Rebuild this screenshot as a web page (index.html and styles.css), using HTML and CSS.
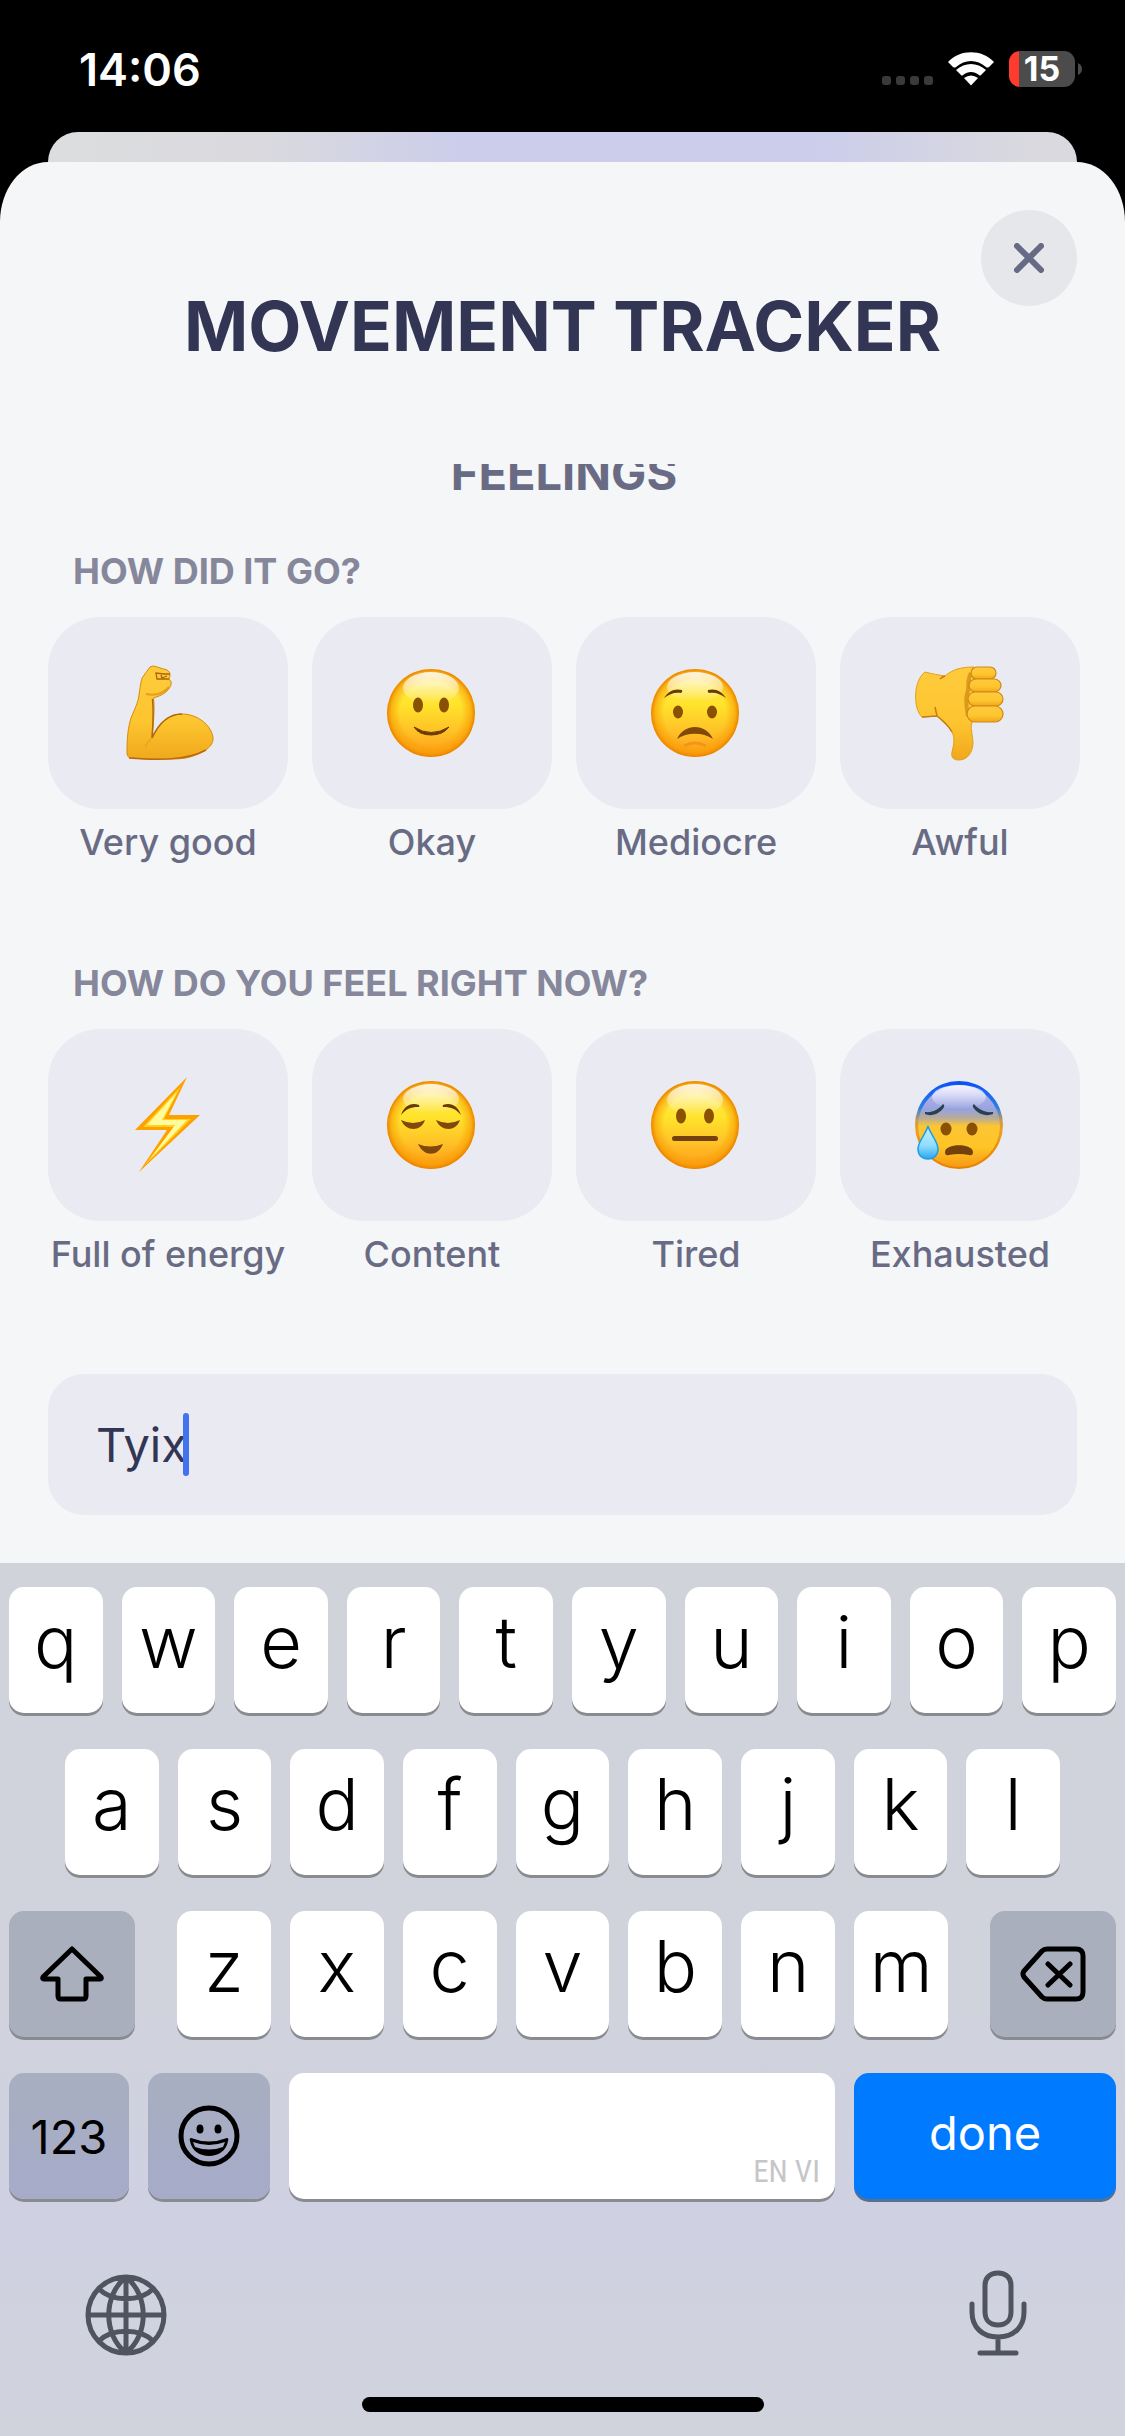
FILE: index.html
```html
<!DOCTYPE html>
<html lang="en">
<head>
  <meta charset="UTF-8">
  <meta name="viewport" content="width=device-width, initial-scale=1.0">
  <title>Movement tracker</title>
  <link rel="stylesheet" href="styles.css">
</head>
<body>

<!-- shared emoji gradients -->
<svg class="defs" aria-hidden="true">
  <defs>
    <linearGradient id="face" x1="0" y1="0" x2="0" y2="1">
      <stop offset="0" stop-color="#ffe95a"/>
      <stop offset="0.4" stop-color="#ffe42c"/>
      <stop offset="0.7" stop-color="#ffc227"/>
      <stop offset="1" stop-color="#ff9c18"/>
    </linearGradient>
    <radialGradient id="rim">
      <stop offset="0.7" stop-color="#f59a00" stop-opacity="0"/>
      <stop offset="0.9" stop-color="#f79a00" stop-opacity="0.6"/>
      <stop offset="1" stop-color="#ea8200" stop-opacity="1"/>
    </radialGradient>
    <linearGradient id="shine" x1="0" y1="0" x2="0" y2="1">
      <stop offset="0" stop-color="#fff" stop-opacity="0.85"/>
      <stop offset="0.4" stop-color="#fff" stop-opacity="0.55"/>
      <stop offset="1" stop-color="#fff" stop-opacity="0"/>
    </linearGradient>
    <linearGradient id="skin" x1="0" y1="0" x2="0" y2="1">
      <stop offset="0" stop-color="#ffcb3c"/>
      <stop offset="0.6" stop-color="#fdc52f"/>
      <stop offset="1" stop-color="#f0a81c"/>
    </linearGradient>
    <linearGradient id="cold" x1="0" y1="0" x2="0" y2="1">
      <stop offset="0" stop-color="#b9b8f5"/>
      <stop offset="0.3" stop-color="#98a3dd"/>
      <stop offset="0.4" stop-color="#b5aa9c"/>
      <stop offset="0.5" stop-color="#fcc534"/>
      <stop offset="0.75" stop-color="#ffc526"/>
      <stop offset="1" stop-color="#f79a14"/>
    </linearGradient>
    <linearGradient id="coldRim" x1="0" y1="0" x2="0" y2="1">
      <stop offset="0" stop-color="#0b4ff5"/>
      <stop offset="0.3" stop-color="#2b80e6"/>
      <stop offset="0.45" stop-color="#c99a55"/>
      <stop offset="0.55" stop-color="#eda01c"/>
      <stop offset="1" stop-color="#e88000"/>
    </linearGradient>
    <linearGradient id="drop" x1="0" y1="0" x2="0" y2="1">
      <stop offset="0" stop-color="#c9f2ff"/>
      <stop offset="0.6" stop-color="#8fdcff"/>
      <stop offset="1" stop-color="#2ba6ee"/>
    </linearGradient>
  </defs>
</svg>

<header class="status-bar">
  <span class="time">14:06</span>
  <div class="status-icons">
    <div class="signal"><i></i><i></i><i></i><i></i></div>
    <svg class="wifi" viewBox="0 0 46 34" aria-hidden="true">
      <path d="M0 10C12-3 34-3 46 10L41 15Q39 16 38 15C29 7 17 7 8 15Q7 16 5 15Z" fill="#fff"/>
      <path d="M8 18C17 10 29 10 38 18L33 23Q32 24 31 23C26 19 20 19 15 23Q14 24 13 23Z" fill="#fff"/>
      <path d="M16 26Q23 21 30 26L23 33.500Z" fill="#fff"/>
    </svg>
    <div class="battery"><span>15</span></div>
    <svg class="battery-cap" viewBox="0 0 4 12" aria-hidden="true"><path d="M0 0Q4 2 4 6T0 12Z" fill="#4b4b4b"/></svg>
  </div>
</header>

<div class="card-behind"></div>

<main class="sheet">
  <button class="close" aria-label="Close">
    <svg viewBox="0 0 30 30" aria-hidden="true"><path d="M3 3L27 27M27 3L3 27"/></svg>
  </button>
  <h1>MOVEMENT TRACKER</h1>

  <div class="scroll">
    <h2>FEELINGS</h2>

    <h3>HOW DID IT GO?</h3>
    <div class="options">
      <button class="option">
        <span class="tile">
          <svg viewBox="0 0 96 96" aria-hidden="true">
            <path d="M30 2Q33 0 37 2L47 5Q51 7 50 11L49 14Q52 16 51 20C48 27 43 30 33.500 33C35 46 33 60 32 73C38 60 47 49 62 49C78 49 92 61 93 73C94 83 79 90 66 93C53 95 30 94 12 93Q7 93 7 88C7 72 8 63 11 53C15 43 18 38 19 30C20 22 21 17 22 13Z" fill="url(#skin)" stroke="#d78a0c" stroke-width="1"/>
            <path d="M32.500 34C34 50 33 60 32 73C38 60 47 49 62 49" fill="none" stroke="#b0680a" stroke-width="1.500"/>
            <path d="M26 29C35 31 43 29 49 22" fill="none" stroke="#e3a01a" stroke-width="2"/>
            <path d="M50 9L44 9L36 8L37 14L49 14M41 10L42 13L47 11" fill="none" stroke="#a8660c" stroke-width="1.300"/>
            <path d="M31 74C28 77 26 80 25 82" fill="none" stroke="#e8a91d" stroke-width="2"/>
            <path d="M9 93C35 95 66 96 86 85" fill="none" stroke="#b9690a" stroke-width="1.500"/>
          </svg>
        </span>
        <span class="label">Very good</span>
      </button>
      <button class="option">
        <span class="tile">
          <svg viewBox="0 0 96 96" aria-hidden="true">
            <circle cx="47" cy="48" r="44" fill="url(#face)"/>
            <circle cx="47" cy="48" r="44" fill="url(#rim)"/>
            <ellipse cx="47" cy="23" rx="28" ry="16" fill="url(#shine)"/>
            <g fill="#8a5004"><ellipse cx="34" cy="40" rx="5" ry="7.500"/><ellipse cx="60" cy="40" rx="5" ry="7.500"/></g>
            <path d="M30 62Q47 73 65 62Q59 70 47 70T30 62Z" fill="#6b3a02" stroke="#6b3a02"/>
          </svg>
        </span>
        <span class="label">Okay</span>
      </button>
      <button class="option">
        <span class="tile">
          <svg viewBox="0 0 96 96" aria-hidden="true">
            <circle cx="47" cy="48" r="44" fill="url(#face)"/>
            <circle cx="47" cy="48" r="44" fill="url(#rim)"/>
            <ellipse cx="47" cy="22" rx="28" ry="15" fill="url(#shine)"/>
            <path d="M16 33C20 26 27 23 34 25Q35 27 33 28C26 27 22 29 16 33ZM78 33C74 26 67 23 60 25Q59 27 61 28C68 27 72 29 78 33Z" fill="#6b3a02"/>
            <g fill="#8a5004"><ellipse cx="30" cy="47" rx="5" ry="6.500"/><ellipse cx="64" cy="47" rx="5" ry="6.500"/></g>
            <path d="M29 74C36 58 58 58 65 74C55 67 39 67 29 74Z" fill="#80480a"/>
            <path d="M36 81Q47 75 58 81" fill="none" stroke="#f0961c" stroke-width="3"/>
          </svg>
        </span>
        <span class="label">Mediocre</span>
      </button>
      <button class="option">
        <span class="tile">
          <svg viewBox="0 0 96 96" aria-hidden="true">
            <path d="M13 7C20 9 27 10 33 11C41 4 50 2 62 2L62 55C57 60 60 65 61 77C61 88 55 95 47 95C41 95 39 92 40 87C42 79 43 73 40 67C36 60 29 56 25 51L10 52C1 44 1 16 13 7Z" fill="url(#skin)" stroke="#e0a01b" stroke-width="1"/>
            <path d="M10 52C17 52 22 51 25 51L23 42M33 11Q30 12 28 14M25 51C32 56 36 60 40 67" fill="none" stroke="#c47d14" stroke-width="1.500"/>
            <path d="M59 8C54 17 58 23 55 29C53 35 55 45 56 51" fill="none" stroke="#dc9a1c" stroke-width="4"/>
            <g fill="url(#skin)" stroke="#cf8815" stroke-width="1.200">
              <rect x="59" y="2" width="25" height="12" rx="6"/>
              <rect x="57" y="14" width="32" height="13" rx="7"/>
              <rect x="56" y="27" width="35" height="14" rx="7"/>
              <rect x="55" y="41" width="36" height="16" rx="8"/>
            </g>
          </svg>
        </span>
        <span class="label">Awful</span>
      </button>
    </div>

    <h3>HOW DO YOU FEEL RIGHT NOW?</h3>
    <div class="options">
      <button class="option">
        <span class="tile">
          <svg viewBox="0 0 96 96" aria-hidden="true">
            <path d="M67 0L49 38H80L19 95L47 53H15Z" fill="#ff9f00"/>
            <path d="M61 9L44 42H71L24 89L54 50H23Z" fill="#ffd21f"/>
            <path d="M57 15L42 43H67L30 82L55 48H27Z" fill="#fffb9c"/>
          </svg>
        </span>
        <span class="label">Full of energy</span>
      </button>
      <button class="option">
        <span class="tile">
          <svg viewBox="0 0 96 96" aria-hidden="true">
            <circle cx="47" cy="48" r="44" fill="url(#face)"/>
            <circle cx="47" cy="48" r="44" fill="url(#rim)"/>
            <ellipse cx="47" cy="22" rx="28" ry="15" fill="url(#shine)"/>
            <path d="M17 38C20 29 27 25 35 28Q36 30 34 30C27 30 22 32 17 38ZM77 38C74 29 67 25 59 28Q58 30 60 30C67 30 72 32 77 38Z" fill="#6b3a02"/>
            <path d="M17 43Q29 49 41 43C37 55 22 55 17 43ZM52 43Q64 49 76 43C72 55 57 55 52 43Z" fill="#80480a"/>
            <path d="M34 67Q46 72 59 67C54 80 40 80 34 67Z" fill="#80480a"/>
          </svg>
        </span>
        <span class="label">Content</span>
      </button>
      <button class="option">
        <span class="tile">
          <svg viewBox="0 0 96 96" aria-hidden="true">
            <circle cx="47" cy="48" r="44" fill="url(#face)"/>
            <circle cx="47" cy="48" r="44" fill="url(#rim)"/>
            <ellipse cx="47" cy="23" rx="28" ry="16" fill="url(#shine)"/>
            <g fill="#8a5004"><ellipse cx="33" cy="39" rx="5" ry="7.500"/><ellipse cx="61" cy="39" rx="5" ry="7.500"/></g>
            <rect x="24" y="59" width="46" height="5" rx="2.500" fill="#75410a"/>
          </svg>
        </span>
        <span class="label">Tired</span>
      </button>
      <button class="option">
        <span class="tile">
          <svg viewBox="0 0 96 96" aria-hidden="true">
            <circle cx="47" cy="48" r="44" fill="url(#coldRim)"/>
            <circle cx="47" cy="49" r="41" fill="url(#cold)"/>
            <ellipse cx="47" cy="20" rx="27" ry="12" fill="url(#shine)"/>
            <path d="M13 35C21 36 27 32 31 27Q33 28 32 30C28 37 19 40 13 37ZM81 35C73 36 66 32 62 27Q60 28 61 30C65 37 74 40 81 37Z" fill="#27424e"/>
            <g fill="#8a5004"><ellipse cx="34" cy="52" rx="5.500" ry="6.500"/><ellipse cx="60" cy="52" rx="5.500" ry="6.500"/></g>
            <path d="M33 75C33 66 61 66 61 75Q61 79 57 78Q47 76 37 78Q33 79 33 75Z" fill="#75410a"/>
            <path d="M16 49C18 57 26 64 26 72C26 78 22 82 16 82S6 78 6 72C6 64 14 57 16 49Z" fill="url(#drop)" stroke="#1b9fe8" stroke-width="1.500"/>
          </svg>
        </span>
        <span class="label">Exhausted</span>
      </button>
    </div>

    <div class="note">
      <input type="text" value="Tyix" aria-label="Note">
      <span class="caret"></span>
    </div>
  </div>
</main>

<section class="keyboard">
  <div class="row letters">
    <button>q</button><button>w</button><button>e</button><button>r</button><button>t</button><button>y</button><button>u</button><button>i</button><button>o</button><button>p</button>
  </div>
  <div class="row letters middle">
    <button>a</button><button>s</button><button>d</button><button>f</button><button>g</button><button>h</button><button>j</button><button>k</button><button>l</button>
  </div>
  <div class="row shift-row">
    <button class="dark" aria-label="Shift">
      <svg width="64" height="56" viewBox="0 0 64 56" aria-hidden="true"><path d="M32 3L61 31Q62 33 60 33H46V50Q46 53 43 53H21Q18 53 18 50V33H4Q2 33 3 31Z"/></svg>
    </button>
    <div class="row letters">
      <button>z</button><button>x</button><button>c</button><button>v</button><button>b</button><button>n</button><button>m</button>
    </div>
    <button class="dark" aria-label="Delete">
      <svg width="66" height="56" viewBox="0 0 66 56" aria-hidden="true"><path d="M27 3H56Q63 3 63 10V46Q63 53 56 53H27Q24 53 22 51L4 31Q2 28 4 25L22 5Q24 3 27 3ZM28 18L50 39M50 18L28 39"/></svg>
    </button>
  </div>
  <div class="row bottom-row">
    <button class="dark numbers">123</button>
    <button class="dark" aria-label="Emoji">
      <svg width="62" height="62" viewBox="0 0 62 62" aria-hidden="true">
        <circle cx="31" cy="31" r="28"/>
        <g class="solid"><ellipse cx="22" cy="24" rx="3.500" ry="4.500"/><ellipse cx="40" cy="24" rx="3.500" ry="4.500"/></g>
        <path class="solid" d="M13 33Q31 40 49 33Q51 33 50 36C47 56 15 56 12 36Q11 33 13 33Z"/>
        <path class="teeth" d="M15 37Q31 43 47 37L45 42Q31 47 17 42Z"/>
      </svg>
    </button>
    <button class="space" aria-label="Space"><span>EN VI</span></button>
    <button class="done">done</button>
  </div>
  <div class="tools">
    <button aria-label="Next keyboard">
      <svg width="82" height="82" viewBox="0 0 82 82" aria-hidden="true"><path d="M41 3A38 38 0 1 1 41 79A38 38 0 1 1 41 3ZM41 3V79M3 41H79M41 3C18 21 18 61 41 79C64 61 64 21 41 3ZM14 15C27 28 55 28 68 15M14 67C27 54 55 54 68 67"/></svg>
    </button>
    <button aria-label="Dictate">
      <svg width="58" height="86" viewBox="0 0 58 86" aria-hidden="true"><path d="M29 3C37 3 42 8 42 15V42C42 50 37 55 29 55S16 50 16 42V15C16 8 21 3 29 3ZM3 34V42C3 57 13 67 29 67S55 57 55 42V34M29 67V83M11 83H47"/></svg>
    </button>
  </div>
  <div class="home-bar"></div>
</section>

</body>
</html>
```
FILE: styles.css
```css
* {
  box-sizing: border-box;
}

body {
  margin: 0;
  min-height: 100vh;
  display: flex;
  flex-direction: column;
  background: #000;
  font-family: Inter, "Liberation Sans", sans-serif;
}

button {
  border: none;
  padding: 0;
  background: none;
  font-family: inherit;
  cursor: pointer;
}

h1, h2, h3 {
  margin: 0;
}

.defs {
  position: absolute;
  width: 0;
  height: 0;
}

/* status bar */
.status-bar {
  height: 132px;
  padding: 6px 43px 0 79px;
  display: flex;
  align-items: center;
  justify-content: space-between;
  color: #fff;
}

.time {
  font-size: 45px;
  font-weight: 600;
}

.status-icons {
  display: flex;
  align-items: center;
}

.signal {
  display: flex;
  align-self: flex-end;
  gap: 5px;
  margin: 0 15px 2px 0;
}

.signal i {
  width: 9px;
  height: 9px;
  border-radius: 3px;
  background: #3a3a3a;
}

.wifi {
  width: 46px;
  height: 34px;
  margin-right: 15px;
}

.battery {
  width: 66px;
  height: 36px;
  border-radius: 11px;
  background: linear-gradient(to right, #ff3b30 10px, #4b4b4b 10px);
  text-align: center;
  font-size: 34px;
  line-height: 36px;
  font-weight: 700;
}

.battery-cap {
  width: 4px;
  height: 12px;
  margin-left: 3px;
}

/* sheet */
.card-behind {
  height: 30px;
  margin: 0 48px;
  border-radius: 30px 30px 0 0;
  background: linear-gradient(to right, #dcdddf 0%, #dadade 20%, #cccdea 40%, #cccdea 75%, #d9d9df 95%);
}

.sheet {
  position: relative;
  flex: 1;
  padding-top: 128px;
  border-radius: 48px 48px 0 0 / 60px 60px 0 0;
  background: #f4f6f8;
}

.close {
  position: absolute;
  top: 48px;
  right: 48px;
  width: 96px;
  height: 96px;
  border-radius: 50%;
  background: #e6e7eb;
  display: flex;
  align-items: center;
  justify-content: center;
}

.close svg {
  width: 30px;
  height: 30px;
  fill: none;
  stroke: #676a85;
  stroke-width: 6px;
  stroke-linecap: round;
}

h1 {
  text-align: center;
  font-size: 69px;
  line-height: 72px;
  font-weight: 700;
  color: #323553;
}

.scroll {
  margin-top: 102px;
  padding: 0 45px 48px 48px;
  overflow: hidden;
}

h2 {
  margin-top: -15px;
  text-align: center;
  font-size: 47px;
  line-height: 48px;
  font-weight: 700;
  color: #696b84;
}

h3 {
  margin: 53px 25px 25px;
  font-size: 36px;
  line-height: 42px;
  font-weight: 700;
  color: #86879b;
}

.options {
  display: grid;
  grid-template-columns: repeat(4, 1fr);
  gap: 24px;
}

.options + h3 {
  margin-top: 98px;
}

.option {
  display: flex;
  flex-direction: column;
  align-items: center;
  gap: 12px;
}

.tile {
  width: 100%;
  height: 192px;
  border-radius: 52px;
  background: #e9eaf2;
  display: flex;
  align-items: center;
  justify-content: center;
}

.tile svg {
  width: 96px;
  height: 96px;
}

.label {
  padding-bottom: 1px;
  font-size: 36px;
  line-height: 42px;
  font-weight: 500;
  white-space: nowrap;
  color: #696b84;
}

.note {
  position: relative;
  margin: 98px 3px 0 0;
}

.note input {
  display: block;
  width: 100%;
  height: 141px;
  padding: 0 48px;
  border: none;
  border-radius: 36px;
  outline: none;
  background: #e9eaf2;
  font-family: inherit;
  font-size: 47px;
  color: #323553;
}

.caret {
  position: absolute;
  top: 39px;
  left: 135px;
  width: 6px;
  height: 63px;
  border-radius: 3px;
  background: #4272ee;
}

/* keyboard */
.keyboard {
  padding: 24px 9px;
  display: flex;
  flex-direction: column;
  gap: 36px;
  background: linear-gradient(to bottom, #d0d3da 0%, #d0d3dc 50%, #cfd0e2 76%, #d0d2df 86%, #d0d3dc 100%);
}

.row {
  display: grid;
  gap: 19px;
}

.row button {
  height: 126px;
  border-radius: 15px;
  background: #fff;
  box-shadow: 0 3px 0 #898b90;
  color: #000;
  display: flex;
  align-items: center;
  justify-content: center;
}

.letters {
  grid-auto-flow: column;
  grid-auto-columns: 1fr;
}

.row.letters button {
  padding-bottom: 18px;
  font-size: 72px;
  font-weight: 300;
}

.middle {
  padding: 0 56px;
}

.shift-row {
  grid-template-columns: 126px 1fr 126px;
  gap: 42px;
}

.bottom-row {
  grid-template-columns: 120px 122px 1fr 262px;
}

.row .dark {
  background: #a9afbc;
}

.bottom-row .dark {
  background: linear-gradient(to bottom, #a7afc0, #a6abc9);
}

.dark svg,
.tools svg {
  fill: none;
  stroke: #000;
  stroke-width: 5px;
  stroke-linecap: round;
  stroke-linejoin: round;
}

.dark .solid {
  fill: #000;
  stroke: none;
}

.dark .teeth {
  fill: #a7adc4;
  stroke: none;
}

.row .numbers {
  font-size: 47px;
}

.row .space {
  align-items: flex-end;
  justify-content: flex-end;
  padding: 0 15px 9px;
  font-family: "Roboto Condensed", "Open Sans Condensed", Roboto, sans-serif;
  font-size: 31px;
  color: #c6c6c8;
}

.row .done {
  padding-bottom: 8px;
  background: #007aff;
  box-shadow: 0 3px 0 #58708f;
  color: #fff;
  font-size: 47px;
}

.tools {
  margin-top: 35px;
  padding: 0 89px 0 76px;
  display: flex;
  align-items: flex-end;
  justify-content: space-between;
}

.tools svg {
  display: block;
  stroke: #50545e;
}

.home-bar {
  align-self: center;
  width: 402px;
  height: 15px;
  margin-top: 5px;
  border-radius: 8px;
  background: #000;
}
```
